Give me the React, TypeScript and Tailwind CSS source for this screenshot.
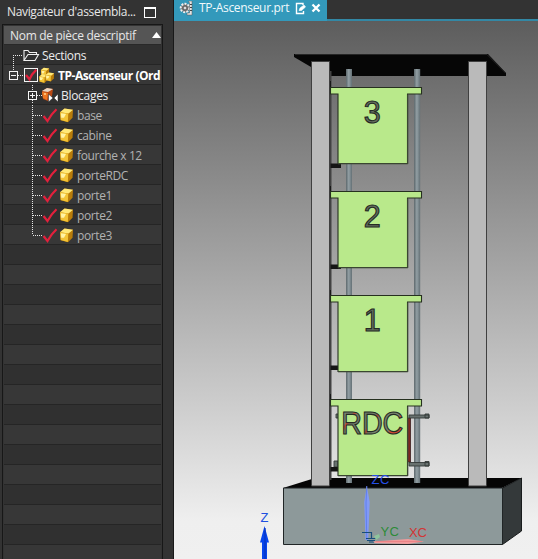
import React from "react";

type Kind = "sections" | "root" | "group" | "part" | "last" | "empty";
type Item = { kind: Kind; label: string };

const items: Item[] = [
  { kind: "sections", label: "Sections" },
  { kind: "root", label: "TP-Ascenseur (Ord" },
  { kind: "group", label: "Blocages" },
  { kind: "part", label: "base" },
  { kind: "part", label: "cabine" },
  { kind: "part", label: "fourche x 12" },
  { kind: "part", label: "porteRDC" },
  { kind: "part", label: "porte1" },
  { kind: "part", label: "porte2" },
  { kind: "last", label: "porte3" },
  ...Array.from({ length: 16 }, (): Item => ({ kind: "empty", label: "" })),
];

const labelStyle: Record<Kind, string> = {
  sections: "text-[#ececec] tracking-[-0.3px]",
  root: "text-white font-bold tracking-[-0.45px]",
  group: "text-[#ececec] tracking-[-0.3px]",
  part: "text-[#b2b2b2] tracking-[-0.4px]",
  last: "text-[#b2b2b2] tracking-[-0.4px]",
  empty: "",
};

const gutter: Record<Kind, string> = {
  sections: "w-[38px]",
  root: "w-[54px]",
  group: "w-[57px]",
  part: "w-[73px]",
  last: "w-[73px]",
  empty: "w-0",
};

function Cube({ x, y, s = 1 }: { x: number; y: number; s?: number }) {
  return (
    <g transform={`translate(${x} ${y}) scale(${s})`}>
      <path d="M0 4 4.5 0.3 13 1.5 12.5 9.5 8 14 0.5 12Z" fill="#b87c0a" />
      <path d="M0 4 4.5 0.3 13 1.5 8.5 5.3Z" fill="#ffe878" />
      <path d="M0 4 8.3 5.3 7.8 13.6 0.7 11.8Z" fill="#f3c436" />
      <path d="M1 5 6 5.8 4 9.5 1.2 9.5Z" fill="#fff3a6" />
    </g>
  );
}

function Check({ x, y }: { x: number; y: number }) {
  return <path transform={`translate(${x} ${y})`} d="M0.5 7.5 4.5 12.5 Q8 6 13.5 0.8" fill="none" stroke="#e3203c" strokeWidth="2.2" />;
}

function Lines({ d }: { d: string }) {
  return <path d={d} fill="none" stroke="#e8e8e8" strokeDasharray="1 1" shapeRendering="crispEdges" />;
}

function Glyph({ kind }: { kind: Kind }) {
  if (kind === "sections")
    return (
      <>
        <Lines d="M9.5 10V20M9 10.5H19" />
        <path d="M20 15.5V5.5H24L25.5 7.5H32.5V9.5M20 15.5 24 9.5H34.5L31 15.5Z" fill="none" stroke="#f0f0f0" strokeWidth="1.1" />
      </>
    );
  if (kind === "root")
    return (
      <>
        <Lines d="M9.5 0V6M14 10.5H20" />
        <path d="M5.5 6.5H13.5V14.5H5.5ZM7 10.5H12" fill="none" stroke="#f4f4f4" shapeRendering="crispEdges" />
        <path d="M20.5 3.5H33.5V16.5H20.5Z" fill="none" stroke="#f4f4f4" shapeRendering="crispEdges" />
        <path d="M22 10 25.5 14.3Q27.5 9 32.3 4.8" fill="none" stroke="#e3203c" strokeWidth="2.2" />
        <Cube x={37} y={2.5} s={0.63} />
        <Cube x={35.2} y={8.8} s={0.66} />
        <Cube x={41.5} y={7.3} s={0.66} />
      </>
    );
  if (kind === "group")
    return (
      <>
        <Lines d="M28.5 0V6M28.5 15V20M33 10.5H38" />
        <path d="M24.5 6.5H32.5V14.5H24.5ZM26 10.5H31M28.5 8V13" fill="none" stroke="#f4f4f4" shapeRendering="crispEdges" />
        <path d="M38 6 43 3 49 4 48 11 44 16 39 14Z" fill="#b84813" />
        <path d="M38 6 43 3 49 4 44 7Z" fill="#e9d6c4" />
        <path d="M38 7 44 8 43 15 39 13Z" fill="#ee7722" />
        <path d="M40 8 42 8 42 10 40 10Z" fill="#ffba70" />
        <path d="M44.5 9 49 13 44.5 17ZM54 9 50 13 54 17Z" fill="#fff" stroke="#222" strokeWidth=".5" />
      </>
    );
  return (
    <>
      <Lines d={kind === "last" ? "M28.5 0V10M29 10.5H39" : "M28.5 0V20M29 10.5H39"} />
      <Check x={39} y={3.5} />
      <Cube x={56} y={3.3} />
    </>
  );
}

function TreeRow({ item, index }: { item: Item; index: number }) {
  return (
    <div className={`flex h-5 shrink-0 items-start overflow-hidden border-b border-[#252525] ${index % 2 ? "bg-[#373737]" : "bg-[#303030]"}`}>
      {item.kind !== "empty" && (
        <>
          <svg className={`h-5 shrink-0 ${gutter[item.kind]}`}>
            <Glyph kind={item.kind} />
          </svg>
          <span className={`whitespace-nowrap pt-px text-[12px] leading-[19px] ${labelStyle[item.kind]}`}>{item.label}</span>
        </>
      )}
    </div>
  );
}

function Door({ y, label, bracket }: { y: number; label: string; bracket: number }) {
  const wide = label.length > 1;
  return (
    <g>
      <rect x={330.5} y={y + bracket} width={10.5} height={4.5} fill="#151515" />
      <path d={`M330.5 ${y}H421.5V${y + 6.5}H407.5V${y + 76}H338V${y + 6.5}H330.5Z`} fill="#b9e98b" stroke="#26301f" strokeWidth="1.1" />
      <path d={`M407.8 ${y + 7}V${y + 76.3}H338`} fill="none" stroke="#43513a" strokeWidth="1" />
      <text
        x={372.3}
        y={y + (wide ? 34.8 : 35.2)}
        textAnchor="middle"
        fontSize={30.5}
        textLength={wide ? 62 : undefined}
        lengthAdjust="spacingAndGlyphs"
        fill={wide ? "url(#carve)" : "#646e5f"}
        stroke="#252b24"
        strokeWidth="1.1"
        className="font-['Liberation_Sans',sans-serif]"
      >
        {label}
      </text>
    </g>
  );
}

function Model() {
  return (
    <svg className="block h-full w-full" viewBox="174 21 364 538">
      <defs>
        <linearGradient id="rod">
          <stop offset="0" stopColor="#5d686c" />
          <stop offset=".45" stopColor="#929fa4" />
          <stop offset="1" stopColor="#647075" />
        </linearGradient>
        <linearGradient id="carve" x1="0" x2="1" y1="0" y2=".4">
          <stop offset="0" stopColor="#87937f" />
          <stop offset=".22" stopColor="#78836f" />
          <stop offset=".25" stopColor="#d34a35" />
          <stop offset=".3" stopColor="#6f7a69" />
          <stop offset=".56" stopColor="#6f7a69" />
          <stop offset=".6" stopColor="#b9412f" />
          <stop offset=".64" stopColor="#78836f" />
          <stop offset=".89" stopColor="#78836f" />
          <stop offset=".94" stopColor="#d34a35" />
        </linearGradient>
      </defs>
      <path d="M294 54H488L506 73V76H331L311 67 294 57Z" fill="#060606" />
      <path d="M295 54.5H487L505.5 73" fill="none" stroke="#262626" />
      <path d="M283 488 315 478H521.5L502 488Z" fill="#050505" />
      <path d="M502.5 488 521.5 478V531L502.5 544.5Z" fill="#34393a" stroke="#191c1d" />
      <path d="M283.5 488H502.5V544.5H283.5Z" fill="#8d999a" stroke="#202526" />
      <rect x="346" y="69" width="6" height="414" fill="url(#rod)" />
      <rect x="414" y="69" width="6.2" height="414" fill="url(#rod)" />
      <path d="M329 71H331.5V480H329Z" fill="#424242" />
      <path d="M407 418H410.5V462H407Z" fill="#7d2522" stroke="#3b2020" strokeWidth=".8" />
      <g fill="#68716f" stroke="#343a39" strokeWidth=".9">
        <path d="M409 415H429V418H409ZM425 414H429V418H425ZM409 462.5H429V466H409ZM425 461.5H429V466H425Z" />
        <path d="M336 414h3v4h-3ZM334 461h4v6h-4Z" />
      </g>
      <path d="M311.5 61.5H329.5V486H311.5ZM468.5 61.5H486.5V486H468.5Z" fill="#bababa" stroke="#404040" strokeWidth="1" />
      <path d="M330.5 81v7M330.5 186v7M330.5 290v7M330.5 394v7" stroke="#181818" />
      <Door y={87.5} label="3" bracket={76} />
      <Door y={191.5} label="2" bracket={73} />
      <Door y={295.5} label="1" bracket={70} />
      <Door y={399.5} label="RDC" bracket={67.5} />
      <path d="M366.8 486 369.7 502 368.2 540H365.5L364.2 502Z" fill="#829af5" />
      <path d="M366.8 486 366 503 366.8 540" fill="none" stroke="#6180ee" />
      <path d="M362 532.5H371.5V538M366 538.5H376M367 540.5H375M369 542H374" fill="none" stroke="#174d7a" strokeWidth="1.2" />
      <path d="M374 536 379 534 380 537 376 540Z" fill="#8dc49c" />
      <path d="M373 541.5 408 539 424 541.5 408 544 375 543Z" fill="#f29b9c" />
      <path d="M376 541.5H422" stroke="#e57579" strokeWidth=".6" />
      <g className="font-['Liberation_Sans',sans-serif]" fontSize="13">
        <text x="371.5" y="484" fill="#254fe6" textLength="18">ZC</text>
        <text x="380.5" y="535.5" fill="#2d8b38" textLength="18.5">YC</text>
        <text x="409" y="536.5" fill="#d33434" textLength="18">XC</text>
        <text x="260.5" y="522" fill="#2050df">Z</text>
      </g>
      <path d="M264.5 526 269 542.5H267V559H262V542.5H260Z" fill="#0745ed" />
      <path d="M265 528V559" stroke="#0735bf" strokeWidth="1.2" />
    </svg>
  );
}

export default function App() {
  return (
    <div className="flex h-[559px] w-[538px] overflow-hidden bg-[#333333] font-['Open_Sans','Noto_Sans',sans-serif]">
      <aside className="flex w-[174px] shrink-0 flex-col border-r border-[#191919] pl-[2px]">
        <div className="flex h-[24px] shrink-0 items-center pl-[5px]">
          <span className="w-[137px] whitespace-nowrap text-[12px] leading-5 tracking-[-0.34px] text-[#e8e8e8]">Navigateur d'assembla...</span>
          <span className="mt-px h-[11px] w-3 border border-t-2 border-white" />
        </div>
        <div className="flex w-[161px] grow flex-col overflow-hidden border-x border-t border-[#171717] px-px">
          <div className="mt-px flex h-[19px] shrink-0 items-center justify-between border-b border-[#292929] bg-[#555555] pl-[6px] text-[12px]">
            <span className="whitespace-nowrap pt-0.5 tracking-[-0.3px] text-[#e7e7e7]">Nom de pièce descriptif</span>
            <svg className="h-[6px] w-[9px]" viewBox="0 0 9 6"><path d="M0 6 4.5 0 9 6Z" fill="white" /></svg>
          </div>
          {items.map((item, index) => <TreeRow key={index} item={item} index={index} />)}
        </div>
      </aside>
      <main className="flex min-w-0 grow flex-col">
        <header className="flex h-[21px] shrink-0 border-b-2 border-[#3388a5] bg-[#333333]">
          <div className="flex h-[21px] w-[153px] shrink-0 items-center bg-[#3399bb]">
            <svg className="h-5 w-[25px] shrink-0" viewBox="174 0 25 20">
              <circle cx="185" cy="7" r="4.3" fill="#777" stroke="#eee" strokeWidth="2" strokeDasharray="2 1.2" />
              <circle cx="185" cy="7" r="2" fill="#ddd" stroke="#555" />
              <path d="M188.5 0H192V14H187V12H189.5V2Z" fill="#e4e4e4" stroke="#555" strokeWidth=".5" />
              <path d="M190 3.5h2M190 6.5h2M190 9.5h2" stroke="#444" />
            </svg>
            <span className="w-[96px] whitespace-nowrap pb-[5px] text-[12px] tracking-[-0.32px] text-[#f1f9fc]">TP-Ascenseur.prt</span>
            <svg className="h-5 w-[30px] shrink-0" viewBox="295 0 30 20" fill="none" stroke="white">
              <path d="M303 4V2.5H296.5V12.5H303.5V10" strokeWidth="1.4" />
              <path d="M299 9.5 300 7 304 4 305.5 6 301.5 9.5Z" fill="white" strokeWidth=".6" />
              <path d="M312.5 3.5 319.5 10.5M319.5 3.5 312.5 10.5" strokeWidth="2.3" />
            </svg>
          </div>
        </header>
        <div className="min-h-0 grow bg-[linear-gradient(to_bottom,#5d5d5d_0px,#9d9d9d_220px,#efefef_500px,#f0f0f0_538px)]">
          <Model />
        </div>
      </main>
    </div>
  );
}
